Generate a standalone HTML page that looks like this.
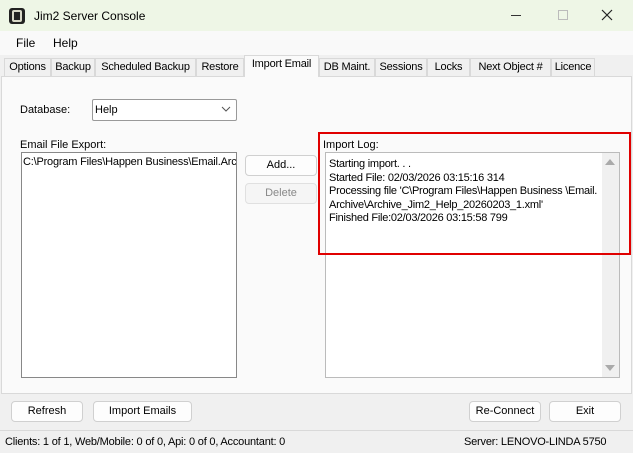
<!DOCTYPE html>
<html><head><style>
*{margin:0;padding:0;box-sizing:border-box}
body{width:633px;height:453px;overflow:hidden;background:#f0f0f0;font-family:"Liberation Sans",sans-serif;font-size:11px;color:#000;position:relative}
.a{position:absolute;white-space:nowrap}
.btn{position:absolute;background:#fdfdfd;border:1px solid #d0d0d0;border-radius:4px;text-align:center;line-height:19px;font-size:11px}
.tab{position:absolute;top:58px;height:18px;line-height:17px;border:1px solid #d9d9d9;border-bottom:none;background:#f0f0f0;text-align:center;font-size:11px;white-space:nowrap;overflow:hidden;letter-spacing:-0.2px}
</style></head><body>
<div class="a" style="left:0;top:0;width:633px;height:31px;background:#eef6e6"></div>
<div class="a" style="left:9px;top:8px;width:16px;height:16px;background:#222;border-radius:3px"></div>
<div class="a" style="left:12px;top:10px;width:10px;height:12px;border:2px solid #d8d8c8;border-radius:2px"></div>
<div class="a" style="left:34px;top:9px;font-size:12px">Jim2 Server Console</div>
<div class="a" style="left:511px;top:15px;width:10px;height:1px;background:#333"></div>
<div class="a" style="left:558px;top:10px;width:10px;height:10px;border:1px solid #bbb"></div>
<svg class="a" style="left:601px;top:9px" width="12" height="12"><path d="M1 1L11 11M11 1L1 11" stroke="#222" stroke-width="1.2"/></svg>
<div class="a" style="left:0;top:31px;width:633px;height:24px;background:#f9f9f9"></div>
<div class="a" style="left:16px;top:36px;font-size:12px">File</div>
<div class="a" style="left:53px;top:36px;font-size:12px">Help</div>
<div class="a" style="left:1px;top:76px;width:631px;height:318px;background:#fafafa;border:1px solid #d9d9d9"></div>
<div class="tab" style="left:4px;width:47px">Options</div>
<div class="tab" style="left:51px;width:44px">Backup</div>
<div class="tab" style="left:95px;width:101px">Scheduled Backup</div>
<div class="tab" style="left:196px;width:48px">Restore</div>
<div class="tab" style="left:244px;width:75px;top:55px;height:22px;background:#fafafa;z-index:2">Import Email</div>
<div class="tab" style="left:319px;width:56px">DB Maint.</div>
<div class="tab" style="left:375px;width:52px">Sessions</div>
<div class="tab" style="left:427px;width:43px">Locks</div>
<div class="tab" style="left:470px;width:81px">Next Object #</div>
<div class="tab" style="left:551px;width:44px">Licence</div>
<div class="a" style="left:20px;top:104px">Database:</div>
<div class="a" style="left:92px;top:99px;width:145px;height:22px;border:1px solid #999;background:#fff;border-radius:2px;padding:4px 2px">Help</div>
<svg class="a" style="left:221px;top:106px" width="10" height="6"><path d="M1 1L5 5L9 1" fill="none" stroke="#555"/></svg>
<div class="a" style="left:20px;top:139px">Email File Export:</div>
<div class="a" style="left:21px;top:152px;width:216px;height:226px;border:1px solid #888;background:#fff;padding:3px 1px;overflow:hidden;letter-spacing:-0.2px">C:\Program Files\Happen Business\Email.Arc</div>
<div class="btn" style="left:245px;top:155px;width:72px;height:21px">Add...</div>
<div class="btn" style="left:245px;top:183px;width:72px;height:21px;background:#f5f5f5;border-color:#e0e0e0;color:#888">Delete</div>
<div class="a" style="left:323px;top:139px">Import Log:</div>
<div class="a" style="left:325px;top:152px;width:295px;height:226px;border:1px solid #bbb;background:#fff;padding:5px 3px;line-height:13.5px;overflow:hidden;letter-spacing:-0.25px">Starting import. . .<br>Started File: 02/03/2026 03:15:16 314<br>Processing file 'C\Program Files\Happen Business \Email.<br>Archive\Archive_Jim2_Help_20260203_1.xml'<br>Finished File:02/03/2026 03:15:58 799</div>
<div class="a" style="left:602px;top:153px;width:17px;height:224px;background:#f0f0f0"></div>
<svg class="a" style="left:605px;top:158px" width="10" height="8"><path d="M0 7L5 1L10 7Z" fill="#aaa"/></svg>
<svg class="a" style="left:605px;top:364px" width="10" height="8"><path d="M0 1L5 7L10 1Z" fill="#aaa"/></svg>
<div class="a" style="left:318px;top:132px;width:313px;height:123px;border:2px solid #e00000"></div>
<div class="btn" style="left:11px;top:401px;width:72px;height:21px">Refresh</div>
<div class="btn" style="left:93px;top:401px;width:99px;height:21px">Import Emails</div>
<div class="btn" style="left:469px;top:401px;width:72px;height:21px">Re-Connect</div>
<div class="btn" style="left:549px;top:401px;width:72px;height:21px">Exit</div>
<div class="a" style="left:0;top:430px;width:633px;height:1px;background:#d9d9d9"></div>
<div class="a" style="left:5px;top:436px;letter-spacing:-0.2px">Clients: 1 of 1, Web/Mobile: 0 of 0, Api: 0 of 0, Accountant: 0</div>
<div class="a" style="left:464px;top:436px;letter-spacing:-0.2px">Server: LENOVO-LINDA 5750</div>
</body></html>
